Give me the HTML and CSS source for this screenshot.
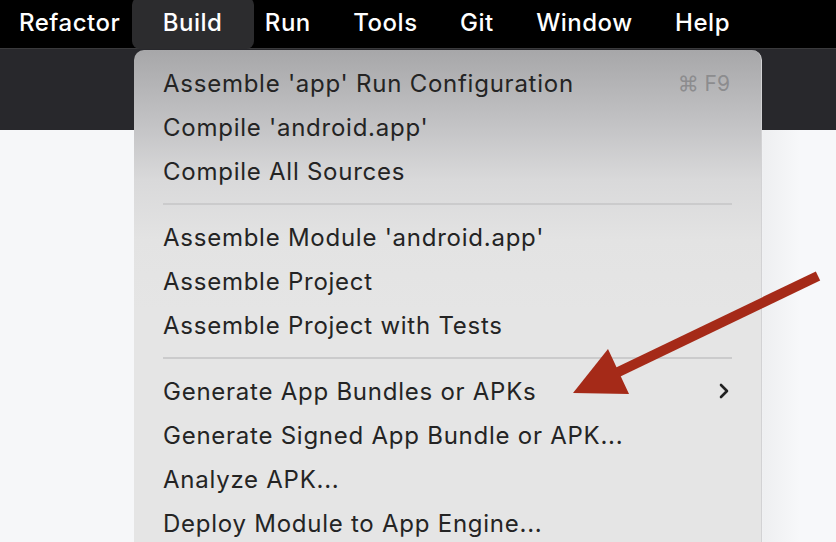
FILE: index.html
```html
<!DOCTYPE html>
<html>
<head>
<meta charset="utf-8">
<link rel="stylesheet" href="styles.css">
</head>
<body>
<div class="screen">
  <div class="menubar">
    <span class="mb-item">Refactor</span>
    <span class="mb-item active">Build</span>
    <span class="mb-item">Run</span>
    <span class="mb-item">Tools</span>
    <span class="mb-item">Git</span>
    <span class="mb-item">Window</span>
    <span class="mb-item">Help</span>
  </div>
  <div class="toolbar"></div>
  <div class="content"></div>

  <div class="menu">
    <div class="row"><span>Assemble 'app' Run Configuration</span><span class="shortcut">⌘ F9</span></div>
    <div class="row"><span>Compile 'android.app'</span></div>
    <div class="row"><span>Compile All Sources</span></div>
    <div class="sep"></div>
    <div class="row"><span>Assemble Module 'android.app'</span></div>
    <div class="row"><span>Assemble Project</span></div>
    <div class="row"><span>Assemble Project with Tests</span></div>
    <div class="sep"></div>
    <div class="row"><span>Generate App Bundles or APKs</span>
      <svg class="chev" width="12" height="16" viewBox="0 0 12 16"><path d="M3 2 L9 8 L3 14" fill="none" stroke="#222" stroke-width="2.6" stroke-linecap="round" stroke-linejoin="round"/></svg>
    </div>
    <div class="row"><span>Generate Signed App Bundle or APK...</span></div>
    <div class="row"><span>Analyze APK...</span></div>
    <div class="row"><span>Deploy Module to App Engine...</span></div>
  </div>

  <svg class="arrow" width="836" height="542" viewBox="0 0 836 542">
    <line x1="818" y1="276" x2="612" y2="375" stroke="#a52a18" stroke-width="10"/>
    <polygon points="573,393 608,349 629,394" fill="#a52a18"/>
  </svg>
</div>
</body>
</html>
```

FILE: styles.css
```css
* { box-sizing: border-box; }
html, body { margin: 0; padding: 0; }
body {
  width: 836px;
  height: 542px;
  overflow: hidden;
  font-family: "Inter", "Liberation Sans", sans-serif;
}
.screen {
  position: relative;
  width: 836px;
  height: 542px;
  display: flex;
  flex-direction: column;
  background: #f6f7f9;
}
.menubar {
  height: 49px;
  background: #000;
  display: flex;
  align-items: center;
  gap: 42.5px;
  padding-left: 19px;
  padding-bottom: 3px;
  border-bottom: 1px solid #3a3a3c;
}
.mb-item {
  position: relative;
  color: #fff;
  font-size: 24px;
  font-weight: 500;
  letter-spacing: 0.5px;
  z-index: 1;
}
.mb-item.active::before {
  content: "";
  position: absolute;
  left: -31px;
  right: -32px;
  top: -11px;
  bottom: -12px;
  background: #2c2c2e;
  border-radius: 8px;
  z-index: -1;
}
.toolbar {
  height: 81px;
  background: #28282c;
}
.content {
  flex: 1;
  background: linear-gradient(to right, #f6f7f9 0, #f6f7f9 755px, #eeeff1 764px, #f7f8fa 800px);
}
.menu {
  position: absolute;
  left: 134px;
  top: 50px;
  width: 628px;
  height: 500px;
  padding: 11px 31px 0 29px;
  border-radius: 10px 10px 0 0;
  background: linear-gradient(to bottom, #a7a7a9 0px, #c3c3c5 75px, #d9d9da 130px, #e3e3e3 190px, #e5e5e5 260px);
  border-right: 1px solid #d2d2d4;
  color: #242424;
  font-size: 24px;
  letter-spacing: 0.75px;
}
.row {
  height: 44px;
  display: flex;
  align-items: center;
  justify-content: space-between;
}
.shortcut {
  color: #8c8c8e;
  font-size: 21px;
  letter-spacing: 0;
}
.sep {
  height: 22px;
  display: flex;
  align-items: center;
  margin-right: -2px;
}
.sep::before {
  content: "";
  display: block;
  width: 100%;
  height: 2px;
  background: #cbcbcc;
}
.arrow {
  position: absolute;
  left: 0;
  top: 0;
  pointer-events: none;
}
```
